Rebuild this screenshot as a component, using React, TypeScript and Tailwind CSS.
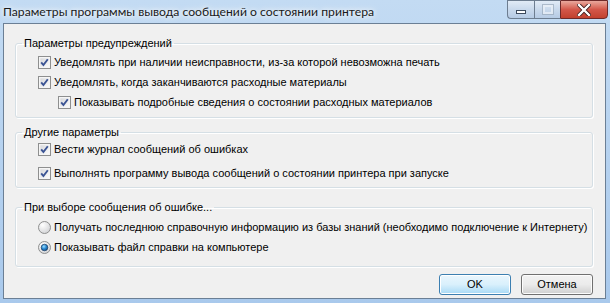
import React from 'react';

const font = { fontFamily: '"Liberation Sans", Arial, sans-serif' };

function CheckBox() {
  return (
    <svg width="13" height="13" viewBox="0 0 13 13" className="shrink-0">
      <defs>
        <linearGradient id="cbg" x1="0" y1="0" x2="1" y2="1">
          <stop offset="0" stopColor="#d6d7da" />
          <stop offset="1" stopColor="#fbfbfb" />
        </linearGradient>
      </defs>
      <rect x="0.5" y="0.5" width="12" height="12" fill="#f4f4f4" stroke="#8e8f8f" />
      <rect x="2" y="2" width="9" height="9" fill="url(#cbg)" stroke="#f8f8f8" strokeWidth="0.6" />
      <path d="M3.2 6.4 L5.4 9 L9.8 3.2" fill="none" stroke="#3b5494" strokeWidth="1.9" />
    </svg>
  );
}

function Radio({ on }: { on?: boolean }) {
  return (
    <svg width="13" height="13" viewBox="0 0 13 13" className="shrink-0">
      <defs>
        <radialGradient id="rbg" cx="0.35" cy="0.3" r="0.8">
          <stop offset="0" stopColor="#ffffff" />
          <stop offset="1" stopColor="#cfd0d3" />
        </radialGradient>
        <radialGradient id="rdot" cx="0.4" cy="0.35" r="0.7">
          <stop offset="0" stopColor="#9fe0ff" />
          <stop offset="0.5" stopColor="#2a8ad4" />
          <stop offset="1" stopColor="#0d4c86" />
        </radialGradient>
      </defs>
      <circle cx="6.5" cy="6.5" r="6" fill="url(#rbg)" stroke="#8e8f8f" />
      {on && <circle cx="6.5" cy="6.5" r="3.3" fill="url(#rdot)" stroke="#1b3b62" strokeWidth="0.7" />}
    </svg>
  );
}

function Row({ children, indent, radio, on }: { children: React.ReactNode; indent?: boolean; radio?: boolean; on?: boolean }) {
  return (
    <div className={`flex items-center h-[20px] gap-[3px] whitespace-nowrap ${indent ? 'pl-[42px]' : 'pl-[22px]'}`}>
      {radio ? <Radio on={on} /> : <CheckBox />}
      <span className="leading-[13px]">{children}</span>
    </div>
  );
}

function Group({ title, children, className }: { title: string; children: React.ReactNode; className?: string }) {
  return (
    <fieldset className={`border border-[#d5dfe5] rounded-[3px] shadow-[inset_1px_1px_0_#fff,1px_1px_0_#fff] ${className ?? ''}`}>
      <legend className="ml-[6px] px-[2px] leading-[13px] text-[#000]">{title}</legend>
      {children}
    </fieldset>
  );
}

export default function App() {
  return (
    <div className="w-[610px] h-[303px] flex flex-col bg-gradient-to-b from-[#c3dbf3] to-[#a9c9ec] text-[11px] text-black" style={font}>
      <div className="h-[23px] flex items-start justify-between shrink-0">
        <span className="pl-[3px] pt-[3px] text-[12.2px] text-[#1a1a1a]" style={{ fontFamily: 'Lato, "Noto Sans", sans-serif', textShadow: '0 0 8px #fff, 0 0 4px #fff' }}>
          Параметры программы вывода сообщений о состоянии принтера
        </span>
        <div className="flex h-[19px] mr-[2px]">
          <div className="w-[27px] h-full border border-[#6d7d90] border-r-0 rounded-bl-[4px] bg-gradient-to-b from-[#e1ebf6] via-[#c9d9ec] to-[#b6cbe4] flex items-center justify-center">
            <div className="w-[10px] h-[4px] mt-[5px] bg-white border border-[#3c4a5c]" />
          </div>
          <div className="w-[26px] h-full border border-[#6d7d90] border-r-0 bg-gradient-to-b from-[#e1ebf6] via-[#c9d9ec] to-[#b6cbe4] flex items-center justify-center">
            <div className="w-[10px] h-[9px] border-[2px] border-[#eef3f9] outline outline-1 outline-[#9aaabb] opacity-70" />
          </div>
          <div className="w-[48px] h-full border border-[#6d2a2a] rounded-br-[4px] bg-gradient-to-b from-[#e8a89d] via-[#d3574a] to-[#c2412f] flex items-center justify-center">
            <svg width="14" height="12" viewBox="0 0 14 12">
              <path d="M2 1 L12 11 M12 1 L2 11" stroke="#3a1a1a" strokeWidth="4" strokeLinecap="square" />
              <path d="M2 1 L12 11 M12 1 L2 11" stroke="#ffffff" strokeWidth="2.4" strokeLinecap="square" />
            </svg>
          </div>
        </div>
      </div>
      <div className="flex-1 ml-[3px] mr-[4px] mb-[4px] border border-[#6b7f95] bg-[#f0f0f0] pl-[11px] pr-[12px] pt-[13px] flex flex-col">
        <Group title="Параметры предупреждений" className="h-[81px] pt-[2px]">
          <Row>Уведомлять при наличии неисправности, из-за которой невозможна печать</Row>
          <Row>Уведомлять, когда заканчиваются расходные материалы</Row>
          <Row indent>Показывать подробные сведения о состоянии расходных материалов</Row>
        </Group>
        <Group title="Другие параметры" className="h-[62px] mt-[8px]">
          <Row>Вести журнал сообщений об ошибках</Row>
          <div className="h-[4px]" />
          <Row>Выполнять программу вывода сообщений о состоянии принтера при запуске</Row>
        </Group>
        <Group title="При выборе сообщения об ошибке..." className="h-[66px] mt-[13px] pt-[3px]">
          <Row radio>Получать последнюю справочную информацию из базы знаний (необходимо подключение к Интернету)</Row>
          <Row radio on>Показывать файл справки на компьютере</Row>
        </Group>
        <div className="flex justify-end gap-[10px] mt-[7px]">
          <button className="w-[72px] h-[21px] rounded-[3px] border border-[#3c7fb1] bg-gradient-to-b from-[#eaf6fd] via-[#d9f0fc] to-[#a7d9f5] shadow-[inset_0_0_0_1px_#ffffff]">OK</button>
          <button className="w-[72px] h-[21px] rounded-[3px] border border-[#707070] bg-gradient-to-b from-[#f2f2f2] via-[#ebebeb] to-[#cfcfcf] shadow-[inset_0_0_0_1px_#fcfcfc]">Отмена</button>
        </div>
      </div>
    </div>
  );
}
